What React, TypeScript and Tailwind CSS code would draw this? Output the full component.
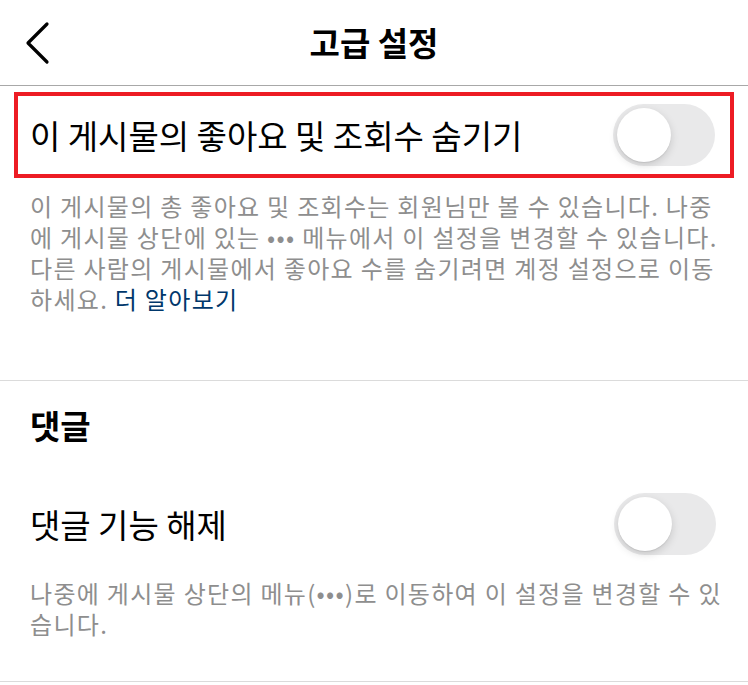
import React from "react";

function Toggle() {
  return (
    <div className="flex h-[62px] w-[102px] shrink-0 items-center rounded-full bg-[#e9e9ea] px-[4px]">
      <div className="h-[54px] w-[54px] rounded-full bg-white shadow-[0_3px_8px_rgba(0,0,0,0.15),0_1px_1px_rgba(0,0,0,0.08)]" />
    </div>
  );
}

export default function App() {
  return (
    <div className="min-h-screen w-full bg-white font-['Noto_Sans_CJK_KR',sans-serif] text-black">
      {/* header */}
      <div className="flex h-[86px] items-center border-b border-[#a8a8a8]">
        <div className="flex w-[80px] shrink-0 items-center pl-[24px]">
          <svg width="28" height="44" viewBox="0 0 28 44" fill="none">
            <path d="M23 3 L4 22 L23 41" stroke="#000" strokeWidth="3.2" strokeLinecap="round" strokeLinejoin="round" />
          </svg>
        </div>
        <h1 className="flex-1 text-center text-[33px] font-bold leading-none">고급 설정</h1>
        <div className="w-[80px] shrink-0" />
      </div>

      {/* highlighted row */}
      <div className="mx-[14px] mt-[6px] flex h-[86px] items-center justify-between border-4 border-[#ed1c24] pl-[12px] pr-[15px]">
        <span className="text-[33px] leading-none">이 게시물의 좋아요 및 조회수 숨기기</span>
        <Toggle />
      </div>

      <p className="mb-[66px] mt-[12px] pl-[30px] pr-[20px] text-[24px] leading-[31px] tracking-[1.3px] text-[#8e8e8e]">
        이 게시물의 총 좋아요 및 조회수는 회원님만 볼 수 있습니다. 나중에 게시물 상단에 있는 ••• 메뉴에서 이 설정을 변경할 수 있습니다. 다른 사람의 게시물에서 좋아요 수를 숨기려면 계정 설정으로 이동하세요.{" "}
        <span className="text-[#00376b]">더 알아보기</span>
      </p>

      {/* comments section */}
      <div className="border-y border-[#dbdbdb] pb-[42px] pt-[24px]">
        <h2 className="px-[30px] text-[33px] font-bold leading-[40px]">댓글</h2>
        <div className="mt-[48px] flex items-center justify-between pl-[30px] pr-[32px]">
          <span className="text-[33px] leading-none">댓글 기능 해제</span>
          <Toggle />
        </div>
        <p className="mt-[22px] pl-[30px] pr-[20px] text-[24px] leading-[31px] tracking-[1.3px] text-[#8e8e8e]">
          나중에 게시물 상단의 메뉴(•••)로 이동하여 이 설정을 변경할 수 있습니다.
        </p>
      </div>
    </div>
  );
}
